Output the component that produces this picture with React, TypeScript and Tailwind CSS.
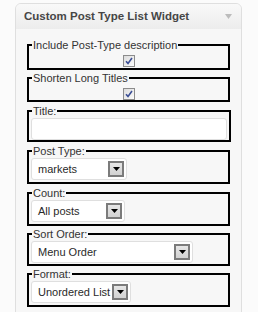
import type { ReactNode } from "react";

const FONT = { fontFamily: '"Liberation Sans", Arial, sans-serif' };

const Checkbox = () => (
  <span className="flex h-[12px] w-[12px] items-center justify-center border border-[#8c8c8c] bg-gradient-to-br from-[#dcdcdc] to-[#fbfbfb]">
    <svg width="8" height="8" viewBox="0 0 8 8">
      <path d="M1 4.2 L3 6.4 L7 1" fill="none" stroke="#3c4f95" strokeWidth="1.6" />
    </svg>
  </span>
);

const Select = ({ value, width }: { value: string; width: string }) => (
  <div className={`flex h-[22px] items-center justify-between rounded-[3px] border border-[#dfdfdf] bg-white pl-[6px] pr-[2px] ${width}`}>
    <span className="text-[11px] text-[#2a2a2a]">{value}</span>
    <span className="flex h-[16px] w-[16px] items-center justify-center border-2 border-[#7b7b7b] bg-gradient-to-b from-[#e6e6e6] to-[#d2d2d2]">
      <svg width="7" height="4" viewBox="0 0 7 4">
        <path d="M0 0 H7 L3.5 4 Z" fill="#000" />
      </svg>
    </span>
  </div>
);

const Group = ({ label, className = "", children }: { label: string; className?: string; children: ReactNode }) => (
  <fieldset className={`w-[203px] border-2 border-black px-[2px] ${className}`}>
    <legend className="ml-[1px] px-[1px] text-[11px] leading-[14px] text-[#333]">{label}</legend>
    {children}
  </fieldset>
);

export default function App() {
  return (
    <div className="min-h-screen bg-[#fbfbfb] pl-[15px] pt-[3px]" style={FONT}>
      <div className="w-[227px] overflow-hidden rounded-t-[6px] border border-[#dfdfdf] bg-[#f7f7f7]">
        <div className="flex h-[25px] items-center justify-between bg-gradient-to-b from-[#f9f9f9] to-[#ececec] pl-[8px] pr-[9px]">
          <span className="text-[11.5px] font-bold text-[#464646]">Custom Post Type List Widget</span>
          <svg width="7" height="5" viewBox="0 0 7 5">
            <path d="M0 0 H7 L3.5 5 Z" fill="#bcbcbc" />
          </svg>
        </div>
        <div className="flex flex-col pb-[10px] pl-[11px] pt-[9px]">
          <Group label="Include Post-Type description">
            <div className="flex justify-center pb-[1px] pt-[3px]">
              <Checkbox />
            </div>
          </Group>
          <Group label="Shorten Long Titles" className="mt-[1px]">
            <div className="flex justify-center pt-[3px]">
              <Checkbox />
            </div>
          </Group>
          <Group label="Title:" className="mt-[2px]">
            <div className="h-[22px] w-[196px] rounded-[3px] border border-[#dfdfdf] bg-white" />
          </Group>
          <Group label="Post Type:" className="mt-[2px]">
            <div className="pb-[2px]">
              <Select value="markets" width="w-[96px]" />
            </div>
          </Group>
          <Group label="Count:" className="mt-[2px]">
            <div className="pb-[2px]">
              <Select value="All posts" width="w-[94px]" />
            </div>
          </Group>
          <Group label="Sort Order:" className="mt-[1px]">
            <div className="pb-[1px]">
              <Select value="Menu Order" width="w-[162px]" />
            </div>
          </Group>
          <Group label="Format:" className="mt-[1px]">
            <div className="pb-[2px]">
              <Select value="Unordered List" width="w-[100px]" />
            </div>
          </Group>
        </div>
      </div>
    </div>
  );
}
